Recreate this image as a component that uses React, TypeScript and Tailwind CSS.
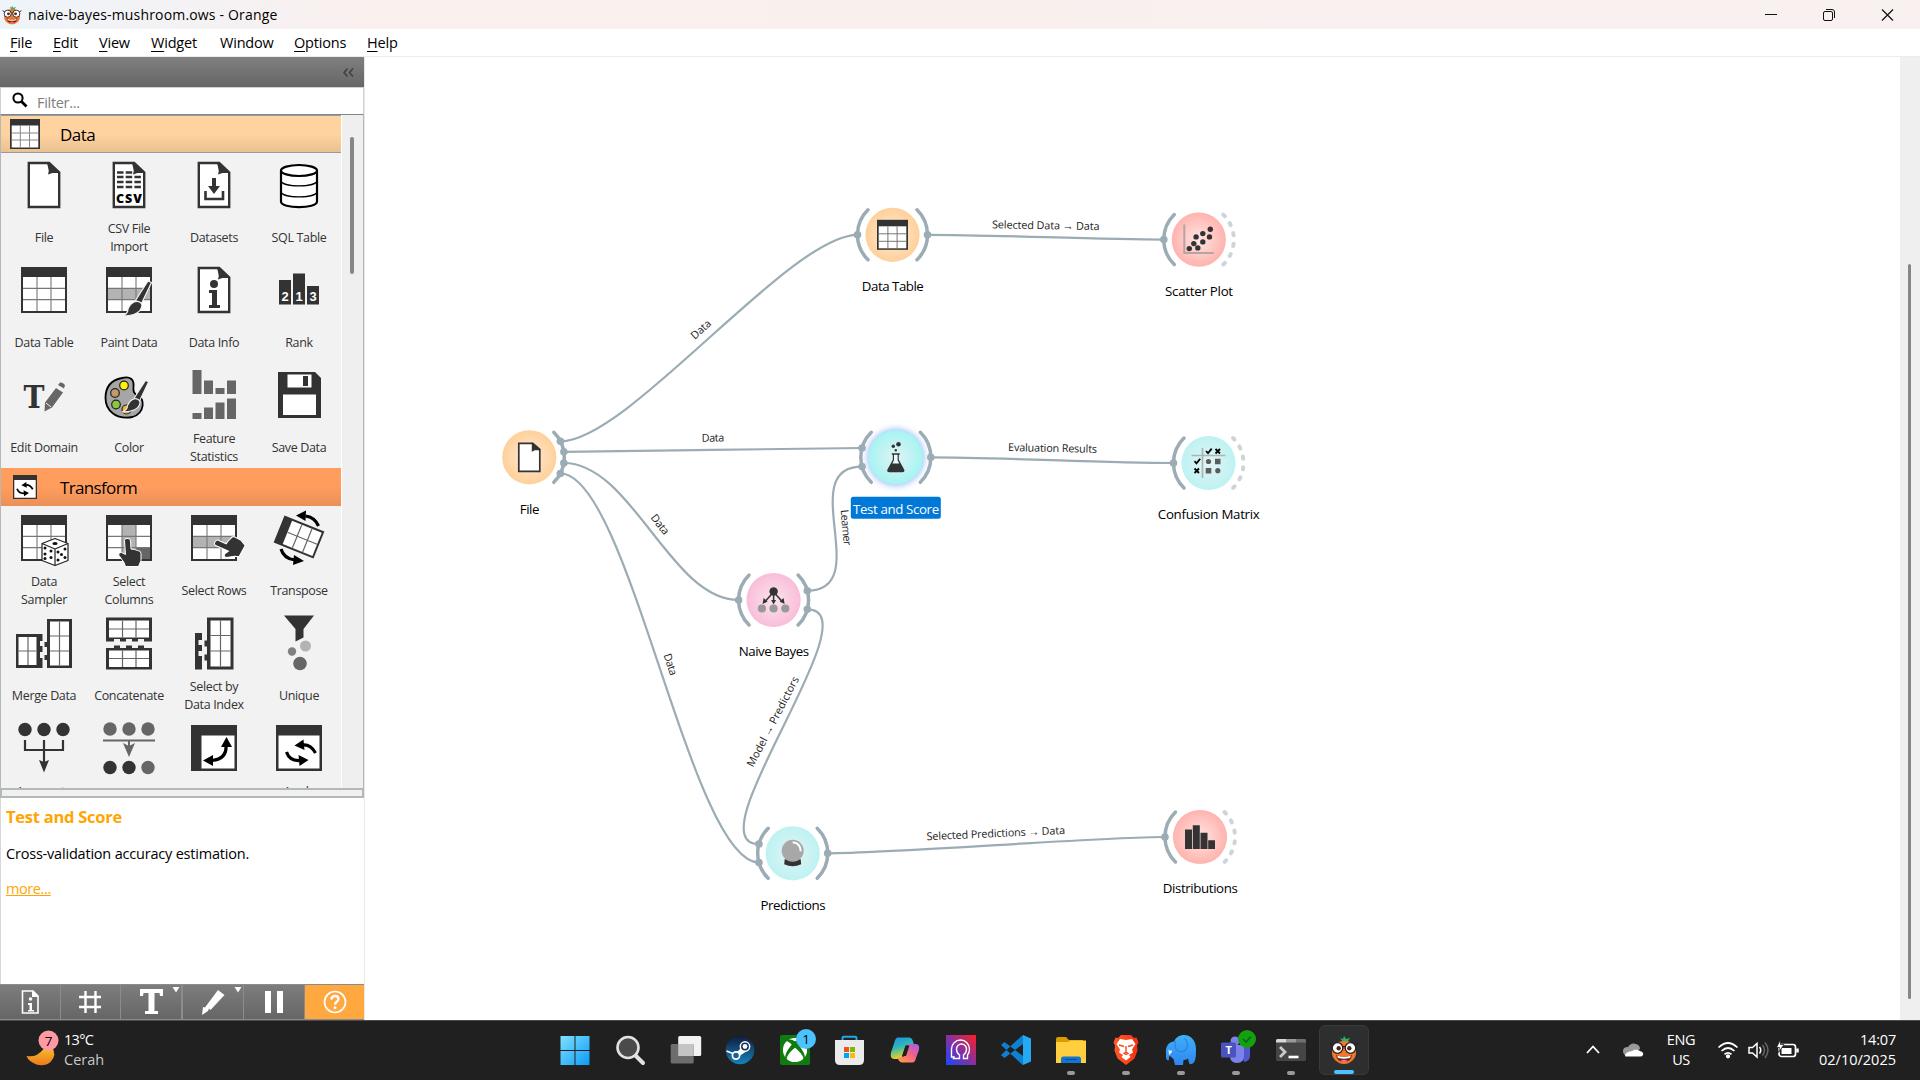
import React from "react";
import { FaXbox } from "react-icons/fa";

const INK = "#333333";
const LINE = "#9cacb4";
const FONT = "'Open Sans','Noto Sans',sans-serif";

/* ---------- shared drawing pieces ---------- */

function Grid({ x = 12, y = 7, w = 46, h = 46, children }: { x?: number; y?: number; w?: number; h?: number; children?: React.ReactNode }) {
  const iw = w - 4;
  const top = y + 10;
  const ih = h - 12;
  return (
    <g>
      <rect x={x} y={y} width={w} height={h} fill={INK} />
      <rect x={x + 2} y={top} width={iw} height={ih} fill="#fff" />
      {children}
      <g stroke="#777" strokeWidth="1.1">
        <path d={`M${x + 2 + iw / 3} ${top}v${ih}M${x + 2 + (2 * iw) / 3} ${top}v${ih}M${x + 2} ${top + ih / 3}h${iw}M${x + 2} ${top + (2 * ih) / 3}h${iw}`} />
      </g>
    </g>
  );
}

function Doc({ children }: { children?: React.ReactNode }) {
  return (
    <g>
      <path d="M20.8 8h20.4l10 9.600v34.400h-30.400z" fill="#fff" stroke={INK} strokeWidth="2.4" />
      <path d="M41 7l11.500 11h-8l-4.500 1.500q1.500-3.500 0-7.500l-1-4z" fill={INK} />
      {children}
    </g>
  );
}

function Brush() {
  return (
    <g stroke="#f2f2f2" strokeWidth="1.200" fill={INK}>
      <path d="M55 21l3.500 1.500-10 21-6-3z" />
      <path d="M41 42q6-2 8 3-1 11-20 11 6-2 6-7 2-5 6-7z" />
    </g>
  );
}

const cycle = (
  <g fill="none" stroke="#000" strokeWidth="3.200">
    <path d="M56 32q-5-9-13-8" />
    <path d="M44 18.500l-9 6 10 4.500z" fill="#000" stroke="none" />
    <path d="M27 31q3 9 13 8.500" />
    <path d="M39 34l10 5-9 6z" fill="#000" stroke="none" />
  </g>
);

const hand = "M0 0q-3-1-3.500 2l1 14-4-2q-3.500 0-2.500 3l5 7 1.500 4h13l2.500-6v-7q0-3-3.500-3l-3-1-3.500-.5-.5-8q0-2.500-2.500-2.500z";

/* ---------- toolbox widget icons, 72 x 60 ---------- */

const icons: Record<string, React.ReactNode> = {
  file: <Doc />,
  csv: (
    <Doc>
      <path d="M24 17.500h18M24 22h24M24 27h24M24 32h24" stroke={INK} strokeWidth="2.400" strokeDasharray="6.500 2.200" />
      <text x="36" y="47.500" fontSize="12.500" fontWeight="800" fontFamily={FONT} textAnchor="middle" textLength="26" fill="#000">CSV</text>
    </Doc>
  ),
  datasets: (
    <Doc>
      <path d="M34 23h4v8h4l-6 8-6-8h4z" fill={INK} />
      <path d="M27.500 36v8h17.500v-8" fill="none" stroke={INK} strokeWidth="2.600" />
    </Doc>
  ),
  sql: (
    <g fill="none" stroke="#000" strokeWidth="2.200">
      <path d="M18 15.500v31c0 7.500 36 7.500 36 0v-31" fill="#fff" />
      <ellipse cx="36" cy="15.500" rx="18" ry="5.500" fill="#fff" />
      <path d="M18 26c2 6.500 34 6.500 36 0M18 37c2 6.500 34 6.500 36 0" strokeWidth="1.200" />
    </g>
  ),
  table: <Grid x={13} />,
  paint: (
    <g>
      <Grid x={13}><rect x="15" y="28" width="42" height="11.500" fill="#b3b3b3" /></Grid>
      <Brush />
    </g>
  ),
  info: (
    <Doc>
      <circle cx="36" cy="24" r="4" fill={INK} />
      <path d="M31 30h8v15h3v3h-11v-3h3v-12h-3z" fill={INK} />
    </Doc>
  ),
  rank: (
    <g>
      <path d="M16 20h12v24.500h-12zM30 13.500h12v31h-12zM44 26h12v18.500h-12z" fill={INK} />
      <g fill="#fff" fontFamily="'Liberation Sans',sans-serif" fontWeight="700" fontSize="13" textAnchor="middle">
        <text x="22" y="41">2</text><text x="36" y="41">1</text><text x="50" y="41">3</text>
      </g>
    </g>
  ),
  edit: (
    <g>
      <text x="26" y="43" fontFamily="'DejaVu Serif','Liberation Serif',serif" fontWeight="700" fontSize="31" textAnchor="middle" textLength="21" lengthAdjust="spacingAndGlyphs" fill={INK}>T</text>
      <path d="M48 23l7 4.500-11 15-7.500 4 .5-9zM50 20l2-2.500q3-.5 5 2.500l-1 3.500z" fill="#666" />
      <path d="M38 38l5 4" stroke="#f2f2f2" />
    </g>
  ),
  color: (
    <g transform="translate(0 1.500)">
      <path d="M29 11.500c9-2 12 2 11.500 8-.5 5 0 8 5 10 6 2 7 17-6 21-16 3-27-6-27-19 0-11 6-18 16.500-20z" fill="#a6a6a6" stroke="#000" strokeWidth="1.800" />
      <g stroke="#222" strokeWidth="1.200">
        <circle cx="31" cy="19" r="4.300" fill="#fff200" />
        <circle cx="22" cy="26.500" r="4.300" fill="#c49a6c" />
        <circle cx="23" cy="38" r="4.300" fill="#8cc63f" />
        <circle cx="33.500" cy="43" r="4.500" fill="#fbb03b" />
      </g>
      <g transform="translate(3 -5) scale(.9)"><Brush /></g>
    </g>
  ),
  stats: (
    <path d="M14.500 5h9v24h-9zM26 15.500h9v13.500h-9zM37.500 23h9v6h-9zM49 15.500h9v13.500h-9zM14.500 48h9v6h-9zM26 42.500h9v11.500h-9zM37.500 37.500h9v16.500h-9zM49 33.500h9v20.500h-9z" fill="#666" />
  ),
  save: (
    <g>
      <path d="M15 7h37l6 6v40h-43z" fill={INK} />
      <rect x="24.500" y="9.500" width="24" height="13" fill="#fff" />
      <rect x="40" y="11" width="5" height="10" fill={INK} />
      <rect x="20" y="29.500" width="33" height="20.500" fill="#fff" />
    </g>
  ),
  sampler: (
    <g>
      <Grid x={13} />
      <g fill="#fff" stroke="#222" strokeWidth="1.200" strokeLinejoin="round">
        <path d="M47 30.500l13 5v17l-13 5-13-5v-17z" />
        <path d="M34 35.500l13 5.500 13-5.500M47 41v16.500" fill="none" />
      </g>
      <g fill="#111">
        <ellipse cx="47" cy="35.500" rx="2.600" ry="1.500" />
        {[[37, 40], [43, 43], [37, 46], [43, 49.500], [37, 50.500], [50, 44], [57, 41], [53.500, 46.500], [50, 52], [57, 49.500]].map(([a, b]) => (
          <circle key={`${a}-${b}`} cx={a} cy={b} r="1.500" />
        ))}
      </g>
    </g>
  ),
  columns: (
    <g>
      <Grid x={13}>
        <rect x="29" y="17" width="14" height="34" fill="#b3b3b3" />
        <rect x="43" y="39" width="14" height="12" fill="#666" />
      </Grid>
      <path transform="translate(35 30.500)" d={hand} fill={INK} stroke="#fff" strokeWidth="1" />
    </g>
  ),
  rows: (
    <g>
      <Grid x={13}>
        <rect x="15" y="28" width="42" height="11.500" fill="#b3b3b3" />
      </Grid>
      <path transform="translate(37.500 33.500) rotate(-62)" d={hand} fill={INK} stroke="#fff" strokeWidth="1" />
    </g>
  ),
  transpose: (
    <g>
      <g transform="rotate(22 36 29)">
        <rect x="14.500" y="14.500" width="43" height="29" fill={INK} />
        <rect x="23.500" y="16.500" width="32" height="25" fill="#fff" />
        <path d="M34 16.500v25M45 16.500v25M23.500 29h32" stroke="#666" strokeWidth="1.200" />
      </g>
      <g fill="none" stroke="#000" strokeWidth="3.200">
        <path d="M55.500 18q-4-9-13-10" />
        <path d="M43 2.500l-10 5 9.500 5.500z" fill="#000" stroke="none" />
        <path d="M18 41q3 10 14 11" />
        <path d="M31 47l10 6-11 4z" fill="#000" stroke="none" />
      </g>
    </g>
  ),
  merge: (
    <g>
      <path d="M8 21h26.500v7h-2.500v5h2.500v6h-2.500v6h2.500v10h-26.500z" fill={INK} />
      <path d="M10.500 24h18v28h-18z" fill="#fff" />
      <path d="M20 24v28M10.500 38h18" stroke="#666" strokeWidth="1.200" />
      <path d="M39 6h25v49h-25v-8h-2.500v-5h2.500v-8h-2.500v-5h2.500z" fill={INK} />
      <path d="M42 8.500h19v44h-19z" fill="#fff" />
      <path d="M51.500 8.500v44M42 23h19M42 38h19" stroke="#666" strokeWidth="1.200" />
    </g>
  ),
  concat: (
    <g>
      <path d="M13 4.500h46v24h-8v-2.500h-6v2.500h-6v-2.500h-6v2.500h-6v-2.500h-6v2.500h-8z" fill={INK} />
      <path d="M16 7.500h40v17h-40z" fill="#fff" />
      <path d="M13 35h8v-2.500h6v2.500h6v-2.500h6v2.500h6v-2.500h6v2.500h8v21.500h-46z" fill={INK} />
      <path d="M16 37.500h40v16.500h-40z" fill="#fff" />
      <path d="M29.500 7.500v17M43 7.500v17M16 16h40M29.500 37.500v16.500M43 37.500v16.500M16 45.500h40" stroke="#666" strokeWidth="1.200" />
    </g>
  ),
  index: (
    <g>
      <path d="M17 20h7v7h-3.500v5h3.500v6h-3.500v5h3.500v13.500h-7zM29 4.500h26.500v52h-26.500v-9h-2.500v-6h2.500v-8h-2.500v-6h2.500z" fill={INK} />
      <path d="M32.500 7.500h20v46h-20z" fill="#fff" />
      <path d="M42.500 7.500v46M32.500 22.500h20M32.500 38h20" stroke="#666" strokeWidth="1.200" />
    </g>
  ),
  unique: (
    <g>
      <path d="M21 2.500h30l-10.500 13.500v8.500l-8 4v-12.500z" fill={INK} />
      <circle cx="42.500" cy="33" r="5.500" fill="#b3b3b3" />
      <circle cx="29" cy="38.500" r="4.200" fill="#808080" />
      <circle cx="37" cy="50.500" r="6.800" fill="#666" />
    </g>
  ),
  aggregate: (
    <g fill={INK}>
      <circle cx="17" cy="11.500" r="6.700" /><circle cx="36" cy="11.500" r="6.700" /><circle cx="55" cy="11.500" r="6.700" />
      <path d="M17 22v10h38v-10M36 22v22" fill="none" stroke={INK} strokeWidth="2.200" />
      <path d="M31 42l5 2 5-2-5 12.500z" />
    </g>
  ),
  group: (
    <g fill="#666">
      <circle cx="17" cy="11" r="6.700" /><circle cx="36" cy="11" r="6.700" /><circle cx="55" cy="11" r="6.700" />
      <path d="M10 22.500h52M36 22v8" stroke="#666" strokeWidth="2" />
      <path d="M30 25l6 3 6-3-6 14z" />
      <circle cx="17" cy="49.500" r="6.700" fill={INK} /><circle cx="36" cy="49.500" r="6.700" fill={INK} /><circle cx="55" cy="49.500" r="6.700" />
    </g>
  ),
  pivot: (
    <g>
      <rect x="13" y="7" width="46" height="46" fill={INK} />
      <rect x="23.500" y="17.500" width="33" height="33" fill="#fff" />
      <path d="M48 27q1 14-14 15.500" fill="none" stroke="#000" strokeWidth="3.200" />
      <path d="M48.500 19l5.500 10h-11zM25 42.500l10-5.500v11z" fill="#000" />
    </g>
  ),
  apply: (
    <g>
      <rect x="13" y="7" width="46" height="46" fill={INK} />
      <rect x="15.500" y="17.500" width="41" height="33" fill="#fff" />
      <g transform="translate(-3.500 3)">{cycle}</g>
    </g>
  ),
};

function Widget({ icon, lines }: { icon: string; lines: string[] }) {
  return (
    <div className="flex h-[105px] flex-col items-center pt-[2px] pl-[1px]">
      <svg width="72" height="60" viewBox="0 0 72 60" className="shrink-0">{icons[icon]}</svg>
      <div className="flex h-[45px] shrink-0 flex-col items-center justify-center text-[12.5px] leading-[18px] tracking-[-0.35px] whitespace-nowrap text-[#333]">
        {lines.map((l, i) => <span key={i} className="h-[18px]">{l}</span>)}
      </div>
    </div>
  );
}

const dataWidgets: [string, string[]][] = [
  ["file", ["File"]], ["csv", ["CSV File", "Import"]], ["datasets", ["Datasets"]], ["sql", ["SQL Table"]],
  ["table", ["Data Table"]], ["paint", ["Paint Data"]], ["info", ["Data Info"]], ["rank", ["Rank"]],
  ["edit", ["Edit Domain"]], ["color", ["Color"]], ["stats", ["Feature", "Statistics"]], ["save", ["Save Data"]],
];

/* The last row is cut off by the panel edge, so only its first label line reaches the view. */
const transformWidgets: [string, string[]][] = [
  ["sampler", ["Data", "Sampler"]], ["columns", ["Select", "Columns"]], ["rows", ["Select Rows"]], ["transpose", ["Transpose"]],
  ["merge", ["Merge Data"]], ["concat", ["Concatenate"]], ["index", ["Select by", "Data Index"]], ["unique", ["Unique"]],
  ["aggregate", ["Aggregate", ""]], ["group", []], ["pivot", []], ["apply", ["Apply", ""]],
];

function Mascot({ className }: { className: string }) {
  return (
    <svg viewBox="0 0 28 30" className={className}>
      <path d="M14 8l-4-5 3 1 1-3 2 3 4-1-2 3 2 1z" fill="#2fb36b" />
      <path d="M14 6c8 0 12 5 12 12 0 6-6 11-12 11s-12-5-12-11c0-7 4-12 12-12z" fill="#f4762b" />
      <path d="M6 20q8 3 16 0-1 7-8 7t-8-7z" fill="#6b1d12" />
      <path d="M7 20.500q7 2.500 14 0l-1 2.500q-6 1.500-12 0z" fill="#fff" />
      <path d="M10 26q4-2.500 8 0-4 2-8 0z" fill="#f0738a" />
      <g fill="#fff" stroke="#2a2020" strokeWidth="1.300">
        <circle cx="7.500" cy="13" r="5.300" /><circle cx="20.500" cy="13" r="5.300" />
      </g>
      <path d="M0 8.500l3 2M28 8.500l-3 2M13 12q1-1 2 0" stroke="#2a2020" strokeWidth="1.500" fill="none" />
      <circle cx="8.700" cy="13.300" r="2.200" fill="#4a2a1a" /><circle cx="19.300" cy="13.300" r="2.200" fill="#4a2a1a" />
    </svg>
  );
}

/* ---------- workflow canvas ---------- */

const ARC = 35;
const arcPath = (cx: number, cy: number, side: 1 | -1) =>
  `M${cx + side * 24.5} ${cy - 25}A${ARC} ${ARC} 0 0 ${side === 1 ? 1 : 0} ${cx + side * 24.5} ${cy + 25}`;

type NodeSpec = {
  name: string; x: number; y: number; fill: string; w: number;
  left?: number[]; right?: number[]; dashed?: boolean; selected?: boolean; art: React.ReactNode;
};

const nodes: NodeSpec[] = [
  {
    name: "File", x: 529.3, y: 457.3, fill: "orange", w: 19.5, right: [-16, -5.5, 5.7, 16.2],
    art: (
      <g>
        <path d="M-10.500-14h14l7 6v22h-21z" fill="#fff" stroke={INK} strokeWidth="1.700" />
        <path d="M2.500-15l9 8h-6l-3 1.500z" fill={INK} />
      </g>
    ),
  },
  {
    name: "Data Table", x: 892.5, y: 234.8, fill: "orange", w: 62, left: [0], right: [0],
    art: (
      <g>
        <path d="M-15.500-15h31v30h-31z" fill={INK} />
        <path d="M-13.800-8.500h27.600v22h-27.600z" fill="#fff" />
        <path d="M-4.600-8.500v22M4.600-8.500v22M-13.800-1h27.600M-13.800 6.500h27.600" stroke="#777" />
      </g>
    ),
  },
  {
    name: "Scatter Plot", x: 1198.8, y: 239.6, fill: "red", w: 68, left: [0], dashed: true,
    art: (
      <g>
        <path d="M-14.500-15v28.500h29.500" fill="none" stroke="#b3a5a5" strokeWidth="2" />
        {[[-9.500, 9], [-5, 4], [-1, 8.300], [-2.700, -2.700], [4, 2.300], [4, -6], [10.700, -2.700], [11.500, -10.300]].map(([a, b]) => (
          <circle key={`${a},${b}`} cx={a} cy={b} r="2.700" fill={INK} />
        ))}
      </g>
    ),
  },
  {
    name: "Test and Score", x: 895.8, y: 457.3, fill: "sel", w: 86, left: [-9.3, 9.3], right: [0], selected: true,
    art: (
      <g fill={INK}>
        <circle cx="2.700" cy="-13" r="2.300" /><circle cx="-2.500" cy="-11" r="1.700" /><circle cx="0" cy="-7" r="1.200" />
        <path d="M-4-4h8v1.500h-1v5l5.500 10q.5 2.500-2 2.500h-13q-2.500 0-2-2.500l5.500-10v-5h-1z" />
        <path d="M-1.800-2.500h3.600v5.500l1.700 3.200h-7l1.700-3.200z" fill="#e6fbfa" />
      </g>
    ),
  },
  {
    name: "Confusion Matrix", x: 1208.5, y: 463, fill: "teal", w: 102, left: [0], dashed: true,
    art: (
      <g>
        <path d="M-17-7.500h34M-6-15v30" stroke="#aab5b5" strokeWidth="1.700" />
        <g stroke="#000" strokeWidth="1.800" fill="none">
          <path d="M-2.500-12l2 2.200 3.700-4.600M-14-1.800l2 2.200 3.700-4.600M7-14l4.500 4.500M11.500-14l-4.500 4.500M-14 5.500l4.500 4.500M-9.500 5.500l-4.500 4.500" />
        </g>
        <g fill="#5c5c5c"><circle cx="0" cy="-1.500" r="2.600" /><circle cx="9.300" cy="7.700" r="2.600" /><path d="M6.500-4.200h5.500v5.400h-5.500zM-2.800 5h5.600v5.400h-5.600z" /></g>
      </g>
    ),
  },
  {
    name: "Naive Bayes", x: 773.6, y: 600, fill: "pink", w: 70.5, left: [0], right: [-9.3, 9.3],
    art: (
      <g>
        <path d="M0-8l-9 10M0-8v10M0-8l9 10" stroke={INK} strokeWidth="1.500" />
        <path d="M-11 4l1-6 4 3.500zM11 4l-1-6-4 3.500zM0 4.500l-2.500-4.500h5z" fill={INK} />
        <circle cx="0" cy="-8.500" r="4.200" fill={INK} />
        <g fill="#999"><circle cx="-11.700" cy="8.500" r="4.100" /><circle cx="0" cy="8.500" r="4.100" /><circle cx="11.700" cy="8.500" r="4.100" /></g>
      </g>
    ),
  },
  {
    name: "Predictions", x: 792.7, y: 853.3, fill: "teal", w: 65, left: [-9.3, 9.3], right: [0],
    art: (
      <g>
        <path d="M-8 6h16l.5 5q-8.500 4-17 0z" fill={INK} />
        <circle cx="0" cy="-2.500" r="11" fill="#a8a8a8" />
        <path d="M0-11q8 1 8 9" fill="none" stroke="#fff" strokeWidth="2" />
      </g>
    ),
  },
  {
    name: "Distributions", x: 1200, y: 837, fill: "red", w: 75, left: [0], dashed: true,
    art: <path d="M-15-7.500h7v19.500h-7zM-7.200-11.800h7v23.800h-7zM.5-4.300h7v16.300h-7zM8.200 3.300h6.800v8.700h-6.800z" fill={INK} />,
  },
];

const anchorX = (dy: number) => Math.sqrt(ARC * ARC - dy * dy);

function WorkflowNode({ n }: { n: NodeSpec }) {
  return (
    <g>
      <g fill="none" stroke={LINE} strokeWidth="3.500" strokeLinecap="round">
        {n.left && <path d={arcPath(n.x, n.y, -1)} />}
        {n.right && <path d={arcPath(n.x, n.y, 1)} />}
        {n.dashed && <path d={arcPath(n.x, n.y, 1)} stroke="#cdd5d9" strokeWidth="4" strokeDasharray="2.200 8.450" />}
      </g>
      <g fill={LINE}>
        {n.left?.map((d) => <circle key={`l${d}`} cx={n.x - anchorX(d)} cy={n.y + d} r="3.800" />)}
        {n.right?.map((d) => <circle key={`r${d}`} cx={n.x + anchorX(d)} cy={n.y + d} r="3.800" />)}
      </g>
      {n.selected && <circle cx={n.x} cy={n.y} r="28.500" fill="#9cc3f5" filter="url(#glow)" />}
      <circle cx={n.x} cy={n.y} r="27.100" fill={`url(#${n.fill})`} />
      <g transform={`translate(${n.x} ${n.y})`}>{n.art}</g>
      {n.selected && <rect x={n.x - 45} y={n.y + 39.500} width="90" height="22" rx="2.500" fill="#0078d7" />}
      <text x={n.x + 0.300} y={n.y + 56.300} textAnchor="middle" fontSize="13.300" fontFamily={FONT} textLength={n.w} fill={n.selected ? "#fff" : "#000"}>{n.name}</text>
    </g>
  );
}

type LinkSpec = { from: [number, number]; to: [number, number]; text: string; x: number; y: number; a: number; w: number };

const links: LinkSpec[] = [
  { from: [560.5, 441.3], to: [857.5, 234.8], text: "Data", x: 701, y: 329.5, a: -42, w: 23 },
  { from: [563.8, 451.8], to: [862, 448], text: "Data", x: 713, y: 438, a: -0.7, w: 22.5 },
  { from: [563.8, 463], to: [738.6, 600], text: "Data", x: 660, y: 524.5, a: 52, w: 22.5 },
  { from: [560.5, 473.5], to: [759, 862.6], text: "Data", x: 670.3, y: 664.5, a: 72, w: 22.5 },
  { from: [807.3, 590.7], to: [862, 466.6], text: "Learner", x: 845.8, y: 527.5, a: 85, w: 36 },
  { from: [807.3, 609.3], to: [759, 844], text: "Model → Predictors", x: 773, y: 721.7, a: -62.5, w: 100 },
  { from: [927.5, 234.8], to: [1163.8, 239.6], text: "Selected Data → Data", x: 1045.8, y: 225.6, a: 1, w: 107.5 },
  { from: [930.8, 457.3], to: [1173.5, 463], text: "Evaluation Results", x: 1052.6, y: 448.3, a: 1.1, w: 89 },
  { from: [827.7, 853.3], to: [1165, 837], text: "Selected Predictions → Data", x: 995.8, y: 833.5, a: -2.6, w: 138.500 },
];

function WorkflowLink({ l }: { l: LinkSpec }) {
  const [x1, y1] = l.from;
  const [x2, y2] = l.to;
  const c = Math.min(Math.hypot(x2 - x1, y2 - y1) / 2, 68);
  return (
    <g>
      <path d={`M${x1} ${y1}C${x1 + c} ${y1} ${x2 - c} ${y2} ${x2} ${y2}`} fill="none" stroke={LINE} strokeWidth="2.200" />
      <text transform={`translate(${l.x} ${l.y}) rotate(${l.a})`} y="3.600" textAnchor="middle" fontSize="10.800" fontFamily={FONT} textLength={l.w} fill="#222">{l.text}</text>
    </g>
  );
}

function Radial({ id, inner, outer }: { id: string; inner: string; outer: string }) {
  return <radialGradient id={id}><stop offset="0.100" stopColor={inner} /><stop offset="1" stopColor={outer} /></radialGradient>;
}

function Canvas() {
  return (
    <svg width="1535" height="963" viewBox="365 57 1535 963" className="block shrink-0 bg-white">
      <defs>
        <Radial id="orange" inner="#ffe8d0" outer="#ffd09a" />
        <Radial id="red" inner="#ffe0de" outer="#ffb3ae" />
        <Radial id="pink" inner="#fbe0eb" outer="#f9bdd9" />
        <Radial id="teal" inner="#dff4f4" outer="#bef2f2" />
        <Radial id="sel" inner="#dbf3f4" outer="#a6f4f2" />
        <filter id="glow" x="-40%" y="-40%" width="180%" height="180%"><feGaussianBlur stdDeviation="3" /></filter>
      </defs>
      {links.map((l) => <WorkflowLink key={`${l.text}${l.a}`} l={l} />)}
      {nodes.map((n) => <WorkflowNode key={n.name} n={n} />)}
    </svg>
  );
}

/* ---------- taskbar ---------- */

const taskIcons: { key: string; running?: boolean; art: React.ReactNode }[] = [
  { key: "start", art: <path d="M5.500 6h14v14h-14zM20.500 6h14v14h-14zM5.500 21h14v14h-14zM20.500 21h14v14h-14z" fill="url(#win)" /> },
  {
    key: "search", art: (
      <g transform="translate(1 0)"><circle cx="17" cy="17.500" r="10.500" fill="#4b4b4b" stroke="#dfe3e6" strokeWidth="2.600" /><path d="M25 26l7 7" stroke="#dfe3e6" strokeWidth="4" strokeLinecap="round" /></g>
    ),
  },
  {
    key: "view", art: (
      <g transform="translate(.7 0)"><rect x="12.500" y="6" width="23" height="20" rx="1.500" fill="#f2f2f2" /><rect x="5" y="14" width="23" height="19.500" rx="1.500" fill="#6d6d6d" /><rect x="12.500" y="14" width="15.500" height="12" fill="#c4c4c4" /></g>
    ),
  },
  {
    key: "steam", art: (
      <g>
        <circle cx="20" cy="20" r="14.300" fill="url(#steam)" />
        <path d="M6.500 21l9 3.500 7-7 3 3.500-6.500 4.500" fill="#fff" stroke="#fff" strokeWidth="1.500" />
        <circle cx="16" cy="25.500" r="3.600" fill="#1b5f93" stroke="#fff" strokeWidth="1.700" />
        <circle cx="25" cy="16.500" r="5.400" fill="#fff" /><circle cx="25" cy="16.500" r="3.200" fill="none" stroke="#16305c" strokeWidth="1.500" />
      </g>
    ),
  },
  {
    key: "xbox", art: (
      <g>
        <rect x="5" y="5" width="30" height="30" rx="2" fill="#107c10" /><FaXbox x="7.500" y="7.500" size={25} color="#fff" />
        <circle cx="31" cy="9" r="10" fill="#4cc2ff" /><text x="31" y="13.800" textAnchor="middle" fontSize="13.500" fontFamily={FONT} fill="#000">1</text>
      </g>
    ),
  },
  {
    key: "store", art: (
      <g>
        <path d="M12.500 12v-4q0-1.200 1.200-1.200h11.600q1.200 0 1.200 1.200v4" fill="none" stroke="#1fa7e8" strokeWidth="2" />
        <path d="M5 10h29v20q0 5-5 5h-19q-5 0-5-5z" fill="#ebebeb" />
        <path d="M14 17h5v5h-5z" fill="#f25022" /><path d="M20 17h5v5h-5z" fill="#7fba00" /><path d="M14 23h5v5h-5z" fill="#00a4ef" /><path d="M20 23h5v5h-5z" fill="#ffb900" />
      </g>
    ),
  },
  {
    key: "copilot", art: (
      <g>
        <path d="M13 7.500h11q3 0 4 4l1 3h-4q-4 0-5 3.500l-3.500 11h-7.500q-4.500 0-3-6.500l3.500-10.500q1-4.500 3.500-4.500z" fill="url(#copA)" />
        <path d="M27.500 32.500h-10q-3.500 0-5-5h3q3.500 0 4.500-3.500l3-10h8q4 0 3 6l-3 8q-1 4.500-3.500 4.500z" fill="url(#copB)" />
        <path d="M20.500 15.500h4l-3.500 10.500h-4z" fill="#202020" />
      </g>
    ),
  },
  {
    key: "head", art: (
      <g>
        <rect x="5" y="5" width="30" height="30" fill="url(#head)" />
        <path d="M13 27h-2.500v-8a9 9 0 0 1 18 0q0 4-2 6v3.500h-4v-3.500q3-2 3-6a5 5 0 0 0-10 0q0 4 3 6v3.500h-6z" fill="none" stroke="#fff" strokeWidth="1.400" />
      </g>
    ),
  },
  {
    key: "code", art: (
      <g>
        <path d="M27 5l8 3.500v23l-8 3.500z" fill="#26a9f2" />
        <path d="M27 5v9l-18.500 14-3.500-3 20-18.500zM27 35v-9l-18.500-14-3.500 3 20 18.500z" fill="#0f7fd0" />
      </g>
    ),
  },
  {
    key: "folder", running: true, art: (
      <g>
        <path d="M5 9q0-2 2-2h8l3 3h14v6h-27z" fill="#d99b00" /><path d="M5 12h12l2-1.500h16v22.500h-30z" fill="#ffcf3f" />
        <path d="M10 33v-4q0-2.500 2.500-2.500h15q2.500 0 2.500 2.500v4z" fill="#1275d0" /><path d="M14 29.500h12" stroke="#084b96" />
      </g>
    ),
  },
  {
    key: "brave", running: true, art: (
      <g>
        <path d="M12 8l3-3h10l3 3 2.500-.5 2 5-1.500 3 .5 5-3 8-8.500 6.500-8.500-6.500-3-8 .5-5-1.500-3 2-5z" fill="url(#brave)" />
        <path d="M14 9l6 1 6-1 3.500 5-3.500 5.500 1 3-4 2.500 1.500 2-4.500 3.500-4.500-3.500 1.500-2-4-2.500 1-3-3.500-5.500z" fill="#fff" />
        <path d="M13 15l5 1.500M27 15l-5 1.500M20 16v6l-2 1.500 2 1 2-1-2-1.500" stroke="#fb4a1e" strokeWidth="1.400" fill="none" />
      </g>
    ),
  },
  {
    key: "elephant", running: true, art: (
      <g>
        <path d="M5 24C4 16 8 12 13 11.500 15 7 19 5 23 5c7 0 12 6 12 14 0 6 0 11-2.500 14-1.500 1.500-4 1.500-4.500 0l-1-4.500q-2 1.500-4.500 1.500l-.5 5h-8l-1.500-6-3.500-3q-1.500 0-1 3 0 2-2 1Q4.500 28 5 24z" fill="url(#ele)" />
        <path d="M14.500 11q-2 7 3 10.500 7 1 9-5 .500-5-3-8" fill="none" stroke="#2a86de" strokeWidth="1.200" />
        <path d="M7.500 19.500q1.500 2 4 1-1 3-3.500 4.500z" fill="#e6f4ff" />
      </g>
    ),
  },
  {
    key: "teams", running: true, art: (
      <g>
        <circle cx="19" cy="11" r="4.500" fill="#7b83eb" /><path d="M24 16h10v10q0 5-6 6z" fill="#5059c9" />
        <path d="M14 15h14v11q0 7-7 7t-7-7z" fill="#7b83eb" />
        <rect x="5" y="12.500" width="15" height="15" rx="1.500" fill="#4b53bc" />
        <text x="12.500" y="24" textAnchor="middle" fontSize="11" fontWeight="700" fontFamily={FONT} fill="#fff">T</text>
        <circle cx="31" cy="9" r="9" fill="#13a10e" /><path d="M27 9l3 3 5-5.500" fill="none" stroke="#062" strokeWidth="1.700" />
      </g>
    ),
  },
  {
    key: "term", running: true, art: (
      <g>
        <rect x="5" y="9" width="30" height="22" rx="1.500" fill="#454545" /><path d="M5 12.500v-2q0-1.500 1.500-1.500h8.500v3.500z" fill="#d8d8d8" /><path d="M15 9h10v3.500h-10z" fill="#9a9a9a" /><path d="M25 9h8.500q1.500 0 1.500 1.500v2h-10z" fill="#707070" />
        <path d="M9 17l5 5-5 5" fill="none" stroke="#c9c9c9" strokeWidth="2.800" /><path d="M17.500 27h10" stroke="#fff" strokeWidth="2.600" />
      </g>
    ),
  },
];

function TaskbarDefs() {
  return (
    <svg width="0" height="0" className="absolute">
      <defs>
        <linearGradient id="win" x2="1" y2="1"><stop stopColor="#7fe0ff" /><stop offset="1" stopColor="#0d9bf5" /></linearGradient>
        <linearGradient id="steam" x2="0" y2="1"><stop stopColor="#121a3c" /><stop offset="1" stopColor="#1383bd" /></linearGradient>
        <linearGradient id="ele" x2="0" y2="1"><stop stopColor="#3fb0f8" /><stop offset="1" stopColor="#2f86f0" /></linearGradient>
        <linearGradient id="copA" x2="0.300" y2="1"><stop stopColor="#1f8ff0" /><stop offset=".5" stopColor="#2fb9b4" /><stop offset="1" stopColor="#f5d020" /></linearGradient>
        <linearGradient id="copB" x1="1" x2="0.200" y2="1"><stop stopColor="#a15bf0" /><stop offset=".5" stopColor="#f0628c" /><stop offset="1" stopColor="#ff9a4a" /></linearGradient>
        <linearGradient id="head" x1="0" y1="1" x2="1" y2="0"><stop stopColor="#1548ff" /><stop offset=".5" stopColor="#8a2f9e" /><stop offset="1" stopColor="#ff1f1f" /></linearGradient>
        <linearGradient id="brave" x2="1"><stop stopColor="#ff5a2a" /><stop offset="1" stopColor="#f7300d" /></linearGradient>
        <linearGradient id="moon" x2="0" y2="1"><stop stopColor="#f7c331" /><stop offset="1" stopColor="#ee7a1c" /></linearGradient>
      </defs>
    </svg>
  );
}

function Taskbar() {
  return (
    <footer className="flex h-[60px] shrink-0 border-t border-[#4a4c4c] bg-[#202020] text-[14.5px] tracking-[-0.4px] text-white">
      <TaskbarDefs />
      <div className="flex w-[547px] shrink-0 items-center pl-[26px]">
        <svg width="36" height="40" viewBox="0 0 36 40" className="-mt-[4px] shrink-0">
          <path d="M0.500 27q10 2 17-7 4-4 8-3 6 9-1 16-6 5-14 2.500-8-3-10-8.500z" fill="url(#moon)" />
          <circle cx="22.500" cy="11.500" r="10" fill="#ff99a4" />
          <text x="22.500" y="16.500" textAnchor="middle" fontSize="13.500" fontFamily={FONT} fill="#000">7</text>
        </svg>
        <div className="ml-[2px] pb-[2px] leading-[20px]">
          <div className="tracking-[-0.7px]">13°C</div>
          <div className="tracking-[0px] text-[#c8c8c8]">Cerah</div>
        </div>
      </div>
      {taskIcons.map((t) => (
        <div key={t.key} className="flex w-[55.15px] shrink-0 flex-col items-center pt-[9px]">
          <svg width="40" height="40" viewBox="0 0 40 40" className="overflow-visible">{t.art}</svg>
          {t.running && <div className="mt-px h-[4px] w-2 rounded-full bg-[#9a9a9a]" />}
        </div>
      ))}
      <div className="mt-[4px] flex h-[50px] w-[50px] shrink-0 flex-col items-center rounded-md border border-[#3a3a3a] bg-[#2d2e2f] pt-[9px]">
        <Mascot className="h-[30px] w-[28px]" />
        <div className="mt-[5px] h-[4px] w-5 rounded-full bg-[#4cc2ff]" />
      </div>
      <div className="flex-1" />
      <div className="flex shrink-0 items-center pb-[2px]">
        <svg width="40" height="40" viewBox="0 0 40 40"><path d="M14 23l6-6.500 6 6.500" fill="none" stroke="#fff" strokeWidth="1.800" /></svg>
        <svg width="40" height="40" viewBox="0 0 40 40"><path d="M14 26q-4-1-4-5t5-4q3-5 8-3 4 1 4 5z" fill="#999" /><path d="M12 26q0-4 7-5 4-3 8 0 4 1 3 4-.500 1.500-3 1.500h-12q-3 0-3-.5z" fill="#fff" /></svg>
        <div className="w-[56px] text-center leading-[20px]"><div>ENG</div><div>US</div></div>
        <svg width="38" height="40" viewBox="0 0 38 40" fill="none" stroke="#fff" strokeWidth="1.700">
          <path d="M9.500 17.500q9.500-9 19 0M12.500 21q6.500-6 13 0M15.500 24.300q3.500-3 7 0" /><circle cx="19" cy="26.300" r="1.300" fill="#fff" />
        </svg>
        <svg width="27" height="40" viewBox="0 0 27 40" fill="none" stroke="#fff" strokeWidth="1.500">
          <path d="M2 17.500h3.500l4.500-4v13.500l-4.500-4h-3.500z" /><path d="M12.500 17q2.500 3 0 6.500" /><path d="M15.500 15q4 5 0 10.500M18 12.500q6 7.500 0 15.500" stroke="#666" />
        </svg>
        <svg width="34" height="40" viewBox="0 0 34 40" fill="none" stroke="#fff" strokeWidth="1.700">
          <rect x="5" y="14.500" width="16.500" height="12" rx="2.500" /><path d="M7.500 18h10v6h-10z" fill="#fff" stroke="none" /><path d="M23.500 18.500v4" strokeWidth="2.500" />
          <path d="M6.500 9.500l-4 8h3l-1 5 5.500-8h-3.500z" fill="#fff" stroke="#202020" strokeWidth=".8" />
        </svg>
        <div className="w-[112px] pr-[24px] text-right leading-[20px] tracking-[0px]"><div className="tracking-[-0.200px]">14:07</div><div>02/10/2025</div></div>
      </div>
    </footer>
  );
}

/* ---------- window chrome ---------- */

const menus: [string, string, string][] = [
  ["F", "ile", "w-[43px]"], ["E", "dit", "w-[46px]"], ["V", "iew", "w-[52px]"], ["W", "idget", "w-[69px]"],
  ["", "Window", "w-[74px]"], ["O", "ptions", "w-[73px]"], ["H", "elp", "w-[50px]"],
];

function ToolButton({ className, children }: { className: string; children: React.ReactNode }) {
  return (
    <div className={`flex h-full items-center justify-center ${className}`}>
      <svg width="58" height="34" viewBox="0 0 58 34">{children}</svg>
    </div>
  );
}

function Sidebar() {
  return (
    <aside className="flex w-[365px] shrink-0 flex-col border-r border-[#e8e8e8] bg-[#f2f2f2]">
      <div className="flex h-[30px] shrink-0 items-center justify-end bg-linear-to-b from-[#808080] to-[#666] pr-[10px]">
        <svg width="11" height="9" viewBox="0 0 11 9" fill="none" stroke="#3f3f3f" strokeWidth="1.500"><path d="M4.500.5l-3.500 4 3.500 4M10 .5l-3.500 4 3.500 4" /></svg>
      </div>
      <div className="flex h-[28px] shrink-0 items-center border border-b-[#7e868a] border-[#d0d0d0] bg-white pl-[11px]">
        <svg width="16" height="16" viewBox="0 0 16 16" className="mb-[3px]" fill="none" stroke="#000"><circle cx="6" cy="6" r="4.600" strokeWidth="2" /><path d="M9.500 9.500l5 5" strokeWidth="2.800" /></svg>
        <span className="mt-[3px] ml-[9px] text-[14.5px] tracking-[-0.3px] text-[#808080]">Filter...</span>
      </div>
      <div className="flex h-[673px] shrink-0 overflow-hidden border-x border-[#b4b8b9]">
        <div className="w-[340px] shrink-0">
          <div className="flex h-[38px] items-center border-y border-[#9a9a9a] bg-linear-to-b from-[#ffd39f] from-50% to-[#eac192] pl-[9px]">
            <svg width="30" height="30" viewBox="0 0 30 30"><path d="M0 0h30v30h-30z" fill={INK} /><path d="M1.700 6.500h26.600v22h-26.600z" fill="#fff" /><path d="M10.300 6.500v22M19.500 6.500v22M1.700 14h26.600M1.700 21h26.600" stroke="#888" /></svg>
            <span className="mt-px ml-[20px] text-[17px] tracking-[-0.5px] text-black">Data</span>
          </div>
          <div className="grid grid-cols-4">{dataWidgets.map(([i, l]) => <Widget key={i} icon={i} lines={l} />)}</div>
          <div className="flex h-[38px] items-center bg-linear-to-b from-[#ff9d5e] from-50% to-[#ea9057] pl-[12px]">
            <svg width="24" height="24" viewBox="0 0 24 24"><path d="M0 0h24v24h-24z" fill={INK} /><path d="M1.300 5h21.400v17.700h-21.400z" fill="#fff" /><g transform="translate(-10.500 -3) scale(.54)">{cycle}</g></svg>
            <span className="mt-px ml-[23px] text-[17px] tracking-[-0.65px] text-black">Transform</span>
          </div>
          <div className="grid grid-cols-4">{transformWidgets.map(([i, l]) => <Widget key={i} icon={i} lines={l} />)}</div>
        </div>
        <div className="flex flex-1 justify-center border-l border-white bg-[#efefef] pt-[22px] pr-[2px]">
          <div className="h-[137px] w-[4px] rounded-full bg-[#868686]" />
        </div>
      </div>
      <div className="h-[10px] shrink-0 border-2 border-[#b4b8b9] bg-[#f0f0f0]" />
      <div className="flex-1 border-l border-[#d8d8d8] bg-white pt-[8px] pl-[5px] text-[14.5px] text-black">
        <div className="text-[16.5px] leading-[22px] font-bold tracking-[-0.25px] text-[#ffa500]">Test and Score</div>
        <div className="mt-[15px] leading-[22px] tracking-[-0.2px]">Cross-validation accuracy estimation.</div>
        <div className="mt-[13px] leading-[22px] tracking-[-0.4px] text-[#ffa500] underline">more...</div>
      </div>
      <div className="flex h-[36px] shrink-0 border-y border-[#8c8c8c] bg-linear-to-b from-[#7d7d7d] to-[#666]">
        <ToolButton className="w-[61px] border-r border-[#8c8c8c]">
          <path d="M21.500 6h10.500l5 5v17h-15.500z" fill="none" stroke="#fff" strokeWidth="1.600" /><path d="M31 5l7 7h-7z" fill="#fff" />
          <circle cx="29.500" cy="14" r="1.800" fill="#fff" /><path d="M27 18h4v7h2v1.500h-6v-1.500h1.500v-5h-1.500z" fill="#fff" />
        </ToolButton>
        <ToolButton className="w-[60px] border-r border-[#8c8c8c]"><path d="M23.500 6v22M33.500 6v22M17 12h22M17 22h22" stroke="#fff" strokeWidth="2.400" fill="none" /></ToolButton>
        <ToolButton className="w-[61px] border-r border-[#8c8c8c]">
          <path d="M18 4h23v7h-3l-.5-3h-5v18h3.500v3h-13v-3h3.500v-18h-5l-.5 3h-3z" fill="#fff" /><path d="M50.500 2h7l-3.500 5.500z" fill="#fff" />
        </ToolButton>
        <ToolButton className="w-[62px] border-x border-[#8c8c8c]"><path d="M34 5l6.500 5-14 15-1.500-1.500-1 2.500-6 4 1-8 2 .5z" fill="#fff" /><path d="M50.500 2h7l-3.500 5.500z" fill="#fff" /></ToolButton>
        <ToolButton className="w-[61px] border-r border-[#8c8c8c]"><path d="M20 6h6v22h-6zM32 6h6v22h-6z" fill="#fff" /></ToolButton>
        <ToolButton className="flex-1 bg-[#ffa840]">
          <circle cx="29" cy="17" r="10.500" fill="none" stroke="#fff" strokeWidth="1.700" />
          <path d="M25.500 14.500q0-3.500 3.500-3.500t3.500 3q0 1.500-1.800 2.700t-1.700 3" fill="none" stroke="#fff" strokeWidth="2.300" /><circle cx="29" cy="22.800" r="1.500" fill="#fff" />
        </ToolButton>
      </div>
    </aside>
  );
}

export default function App() {
  return (
    <div className="flex h-[1080px] w-[1920px] flex-col overflow-hidden bg-white font-['Open_Sans','Noto_Sans',sans-serif] text-[14.5px] text-black">
      <header className="flex h-[29px] shrink-0 items-center bg-linear-to-r from-[#eef4f9] via-[#faf0ee] via-20% to-[#f8f1ef] pl-[2px]">
        <Mascot className="h-[20px] w-[20px]" />
        <span className="ml-[6px] text-[14px] tracking-[0.17px]">naive-bayes-mushroom.ows - Orange</span>
        <div className="ml-auto flex pr-[4px]">
          <svg width="58" height="28" viewBox="0 0 58 28" stroke="#111" fill="none"><path d="M23 13.500h12" /></svg>
          <svg width="58" height="28" viewBox="0 0 58 28" stroke="#111" fill="none"><rect x="23.500" y="10.500" width="9" height="9" rx="1.500" /><path d="M26 8.500h6q2.500 0 2.500 2.500v6" /></svg>
          <svg width="58" height="28" viewBox="0 0 58 28" stroke="#111" fill="none"><path d="M24 8.500l11 11M35 8.500l-11 11" strokeWidth="1.200" /></svg>
        </div>
      </header>
      <nav className="flex h-[28px] shrink-0 items-center border-b border-[#ececec] pl-[10px] tracking-[-0.2px]">
        {menus.map(([k, rest, w]) => (
          <span key={rest} className={`${w} whitespace-nowrap`}><span className="underline underline-offset-[3px]">{k}</span>{rest}</span>
        ))}
      </nav>
      <main className="flex h-[963px] shrink-0">
        <Sidebar />
        <Canvas />
        <div className="flex flex-1 justify-center bg-[#efefef] pt-[207px] pr-[1px]"><div className="h-[735px] w-[3px] rounded-full bg-[#868686]" /></div>
      </main>
      <Taskbar />
    </div>
  );
}
